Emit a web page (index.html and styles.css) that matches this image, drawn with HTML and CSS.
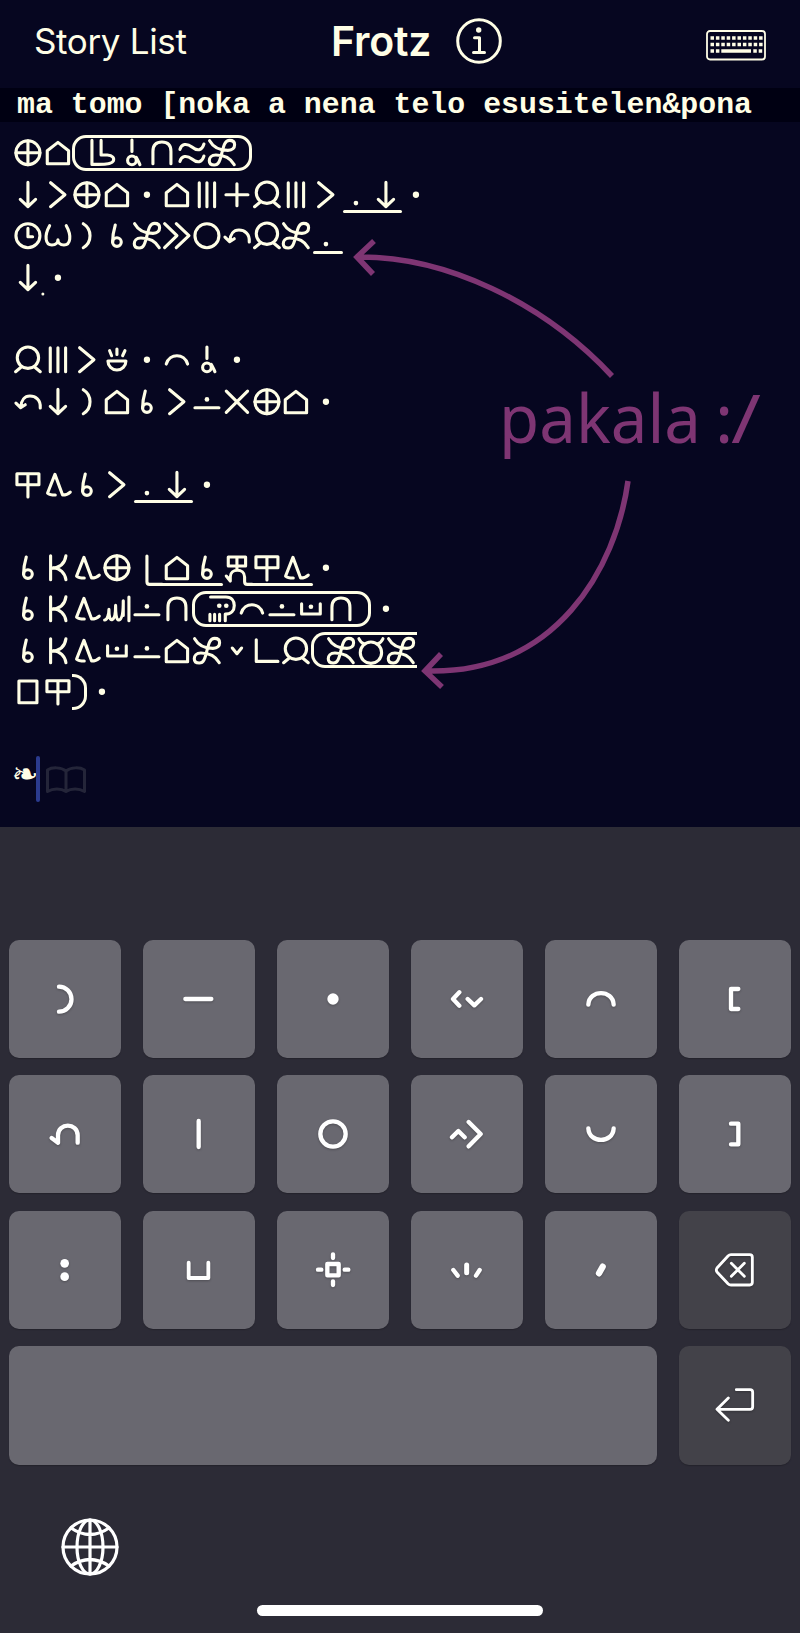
FILE: index.html
```
<!DOCTYPE html>
<html lang="tok">
<head>
<meta charset="utf-8">
<title>Frotz</title>
<link rel="stylesheet" href="styles.css">
</head>
<body>
<svg class="defs" aria-hidden="true">
  <defs>
    <g id="ma"><circle r="36"/><path d="M0-36V36M-36 0H36"/></g>
    <g id="tomo"><path d="M0-31L32-6V33H-32V-6Z"/></g>
    <g id="noka"><path d="M-2.500-37V7H16C32 8 38 16 34 25C30 34 10 35-10 35H-30V-37"/></g>
    <g id="a"><path d="M0-38V-4M13 14C17 20 20 28 24 36"/><circle cy="23" r="13"/></g>
    <g id="nena"><path d="M-27 33V-4C-27-23-17-32 0-32S27-23 27-4V33"/></g>
    <g id="telo"><path d="M-36-10C-32-26-16-30 0-17S30-6 36-26M-36 26C-32 10-16 6 0 19S30 30 36 10"/></g>
    <g id="pona"><path d="M-37-36C-27-18-10-7 18-7C32-7 38-15 38-24C38-33 32-37 23-37C10-37 6-25 0 0C-6 25-10 37-23 37C-32 37-38 33-38 24C-38 15-32 7-18 7C10 7 27 18 37 36"/></g>
    <g id="ni"><path d="M0-37V36M-23 14L0 36L23 14"/></g>
    <g id="li"><path d="M-22-36L21 0L-22 36"/></g>
    <g id="stop"><circle class="dot" r="9.500"/></g>
    <g id="mute"><path d="M-23-36V36M0-36V36M23-36V36"/></g>
    <g id="en"><path d="M0-33V33M-33 0H33"/></g>
    <g id="jan"><circle cy="-6" r="32"/><path d="M-37 36L-20 22M37 36L20 22"/></g>
    <g id="low"><circle class="dot" cy="25" r="7"/></g>
    <g id="tenpo"><circle r="36"/><path d="M0-22V3H14"/></g>
    <g id="suwi"><path d="M-25-30C-42 0-38 28-18 28C-6 28 0 20 0 12C0 20 6 28 18 28C38 28 42 0 25-30"/></g>
    <g id="pini"><path d="M-11-36C16-20 16 20-11 36"/></g>
    <g id="mi"><circle cy="19" r="13"/><path d="M-5-32C-10-15-13 0-13 19"/></g>
    <g id="kin"><path d="M-37-36L0 0L-37 36M-2-36L36 0L-2 36"/></g>
    <g id="ale"><circle r="36"/></g>
    <g id="tan"><path d="M37 19C39-6 22-17 6-17C-10-17-20-5-21 15M-36 4L-22 18L-8 9"/></g>
    <g id="moku"><path d="M-27 4H27A27 27 0 0 1-27 4ZM0-32V-16M-22-27L-16-12M24-27L17-12"/></g>
    <g id="kama"><path d="M-32 13C-22-20 22-20 32 13"/></g>
    <g id="lon"><circle class="dot" cy="-7" r="7"/><path d="M-36 18H36"/></g>
    <g id="ala"><path d="M-32-32L32 32M32-32L-32 32"/></g>
    <g id="sign"><path d="M-33-33H33V0H-33ZM0-33V37"/></g>
    <g id="wile"><path d="M-8 31C-18 31-28 28-31 25L-9-31L14 31C23 31 32 27 37 22"/></g>
    <g id="ken"><path d="M-22-36V36M24-36C21-14 6 0-20 2M-14 0C6 2 21 16 24 36"/></g>
    <g id="pi"><path d="M0-35V42Q0 50 8 50H46"/></g>
    <g id="ijo"><path d="M-26-32H26V-5H-26ZM0-32V6M-32 25L-20 40V28C-20 1 23 1 23 28V42Q23 50 31 50H46"/></g>
    <g id="mun"><path d="M-37 34C-28 34-24 15-24 2C-24 20-22 34-15 33C-6 30-4 4-4-10C-4 10-3 35 6 34C18 32 19 0 19-24V20M36-35V36"/></g>
    <g id="moli"><path d="M-34-35H12C30-35 37-22 37-10C37 5 28 16 10 16V36M-36 17V36M-22 17V36M-7 17V36"/><circle class="dot" cx="-8" cy="-9" r="7"/><circle class="dot" cx="13" cy="-9" r="7"/></g>
    <g id="insa"><path d="M-28-15V16H28V-15"/><circle class="dot" cy="-6" r="7"/></g>
    <g id="anu"><path d="M-14-8L0 9L14-8"/></g>
    <g id="corner"><path d="M-32-33V32H33"/></g>
    <g id="akesi"><circle cy="6" r="32"/><path d="M-36-36Q-31-24-20-20M36-36Q31-24 20-20"/></g>
    <g id="lipu"><path d="M-27-32H27V33H-27Z"/></g>
    <g id="comma"><circle class="dot" cx="44.800" cy="49" r="4.500"/></g>
  </defs>
</svg>

<div class="screen">
  <header class="nav">
    <span class="back">Story List</span>
    <span class="title">Frotz</span>
    <svg class="info" viewBox="0 0 46 46"><circle cx="23" cy="23" r="21.300"/><circle class="solid" cx="22.700" cy="12" r="2.700"/><path d="M18.500 19.700H23.500V34M17.500 34.500H28.500"/></svg>
    <svg class="kbd" viewBox="0 0 60 31"><rect x="1" y="1" width="58" height="28.500" rx="3"/><path class="keys" d="M4.500 8H57M4.500 14.500H57"/><path class="bar" d="M4.500 21H8M9.900 21H13.400M15.300 21H45M47.300 21H50.800M52.700 21H56.200"/></svg>
  </header>
  <div class="status">ma tomo [noka a nena telo esusitelen&amp;pona</div>

  <main class="story">
    <div class="line"><svg><use href="#ma"/></svg><svg><use href="#tomo"/></svg><span class="cart"><svg><use href="#noka"/></svg><svg><use href="#a"/></svg><svg><use href="#nena"/></svg><svg><use href="#telo"/></svg><svg><use href="#pona"/></svg></span></div>
    <div class="line"><svg><use href="#ni"/></svg><svg><use href="#li"/></svg><svg><use href="#ma"/></svg><svg><use href="#tomo"/></svg><svg><use href="#stop"/></svg><svg><use href="#tomo"/></svg><svg><use href="#mute"/></svg><svg><use href="#en"/></svg><svg><use href="#jan"/></svg><svg><use href="#mute"/></svg><svg><use href="#li"/></svg><span class="under"><svg><use href="#low"/></svg><svg><use href="#ni"/></svg></span><svg><use href="#stop"/></svg></div>
    <div class="line"><svg><use href="#tenpo"/></svg><svg><use href="#suwi"/></svg><svg><use href="#pini"/></svg><svg><use href="#mi"/></svg><svg><use href="#pona"/></svg><svg><use href="#kin"/></svg><svg><use href="#ale"/></svg><svg><use href="#tan"/></svg><svg><use href="#jan"/></svg><svg><use href="#pona"/></svg><span class="under"><svg><use href="#low"/></svg></span></div>
    <div class="line"><svg><use href="#ni"/><use href="#comma"/></svg><svg><use href="#stop"/></svg></div>
    <div class="line"></div>
    <div class="line"><svg><use href="#jan"/></svg><svg><use href="#mute"/></svg><svg><use href="#li"/></svg><svg><use href="#moku"/></svg><svg><use href="#stop"/></svg><svg><use href="#kama"/></svg><svg><use href="#a"/></svg><svg><use href="#stop"/></svg></div>
    <div class="line"><svg><use href="#tan"/></svg><svg><use href="#ni"/></svg><svg><use href="#pini"/></svg><svg><use href="#tomo"/></svg><svg><use href="#mi"/></svg><svg><use href="#li"/></svg><svg><use href="#lon"/></svg><svg><use href="#ala"/></svg><svg><use href="#ma"/></svg><svg><use href="#tomo"/></svg><svg><use href="#stop"/></svg></div>
    <div class="line"></div>
    <div class="line"><svg><use href="#sign"/></svg><svg><use href="#wile"/></svg><svg><use href="#mi"/></svg><svg><use href="#li"/></svg><span class="under"><svg><use href="#low"/></svg><svg><use href="#ni"/></svg></span><svg><use href="#stop"/></svg></div>
    <div class="line"></div>
    <div class="line"><svg><use href="#mi"/></svg><svg><use href="#ken"/></svg><svg><use href="#wile"/></svg><svg><use href="#ma"/></svg><svg><use href="#pi"/></svg><span class="under joined"><svg><use href="#tomo"/></svg><svg><use href="#mi"/></svg></span><svg><use href="#ijo"/></svg><span class="under joined"><svg><use href="#sign"/></svg><svg><use href="#wile"/></svg></span><svg><use href="#stop"/></svg></div>
    <div class="line"><svg><use href="#mi"/></svg><svg><use href="#ken"/></svg><svg><use href="#wile"/></svg><svg><use href="#mun"/></svg><svg><use href="#lon"/></svg><svg><use href="#nena"/></svg><span class="cart"><svg><use href="#moli"/></svg><svg><use href="#kama"/></svg><svg><use href="#lon"/></svg><svg><use href="#insa"/></svg><svg><use href="#nena"/></svg></span><svg><use href="#stop"/></svg></div>
    <div class="line"><svg><use href="#mi"/></svg><svg><use href="#ken"/></svg><svg><use href="#wile"/></svg><svg><use href="#insa"/></svg><svg><use href="#lon"/></svg><svg><use href="#tomo"/></svg><svg><use href="#pona"/></svg><svg><use href="#anu"/></svg><svg><use href="#corner"/></svg><svg><use href="#jan"/></svg><span class="cart open-end"><svg><use href="#pona"/></svg><svg><use href="#akesi"/></svg><svg><use href="#pona"/></svg></span></div>
    <div class="line"><svg><use href="#lipu"/></svg><svg><use href="#sign"/></svg><span class="cart open-start"></span><svg><use href="#stop"/></svg></div>
    <div class="line"></div>
    <div class="prompt"><span class="leaf">❧</span><i class="cursor"></i><svg class="book" viewBox="0 0 40 28"><path d="M20 5C15 1 6 1 1.500 4V25.500C7 22 15 22 20 25.500C25 22 33 22 38.500 25.500V4C34 1 25 1 20 5ZV25"/></svg></div>
  </main>

  <svg class="note" viewBox="0 0 800 827">
    <path d="M358 257C445 256 543 302 612 376M374 241L357 257L373 274"/>
    <path d="M628 481C616 568 556 675 426 671M441 654L425 671L442 687"/>
    <text x="499" y="443" textLength="202" lengthAdjust="spacingAndGlyphs">pakala</text>
    <text x="715" y="443">:</text>
    <text x="731" y="443" textLength="30" lengthAdjust="spacingAndGlyphs">/</text>
  </svg>

  <section class="keyboard">
    <div class="grid">
      <div class="key"><svg viewBox="-60 -60 120 120"><path d="M-18-37A37.500 37.500 0 0 1-18 38"/></svg></div>
      <div class="key"><svg viewBox="-60 -60 120 120"><path d="M-41 0H37"/></svg></div>
      <div class="key"><svg viewBox="-60 -60 120 120"><circle class="dot" r="17"/></svg></div>
      <div class="key"><svg viewBox="-60 -60 120 120"><path d="M-23-20L-42 0L-23 20M2 0L22 19L42 0"/></svg></div>
      <div class="key"><svg viewBox="-60 -60 120 120"><path d="M-38 17C-36-29 36-29 38 17"/></svg></div>
      <div class="key"><svg viewBox="-60 -60 120 120"><path d="M10-30H-12V30H10"/></svg></div>

      <div class="key"><svg viewBox="-60 -60 120 120"><path d="M-40 12L-21 26V4C-21-35 38-35 38 4V26"/></svg></div>
      <div class="key"><svg viewBox="-60 -60 120 120"><path d="M-1-39V39"/></svg></div>
      <div class="key"><svg viewBox="-60 -60 120 120"><circle r="38"/></svg></div>
      <div class="key"><svg viewBox="-60 -60 120 120"><path d="M-45 10L-26-9L-7 10M5-36L41 0L5 37"/></svg></div>
      <div class="key"><svg viewBox="-60 -60 120 120"><path d="M-38-17C-36 29 36 29 38-17"/></svg></div>
      <div class="key"><svg viewBox="-60 -60 120 120"><path d="M-12-31H10V31H-12"/></svg></div>

      <div class="key"><svg viewBox="-60 -60 120 120"><circle class="dot" cx="-1" cy="-20" r="13"/><circle class="dot" cx="-1" cy="20" r="13"/></svg></div>
      <div class="key"><svg viewBox="-60 -60 120 120"><path class="thin" d="M-31-22V24H28V-22"/></svg></div>
      <div class="key"><svg viewBox="-60 -60 120 120"><path d="M-17-18H17V16H-17ZM-45-1H-35M35-1H46M0-47V-36M0 34V45"/></svg></div>
      <div class="key"><svg viewBox="-60 -60 120 120"><path d="M-41 0L-28 17M38 0L27 17"/><path class="bold" d="M-1-15V8"/></svg></div>
      <div class="key"><svg viewBox="-60 -60 120 120"><path class="fat" d="M5-10L-6 10"/></svg></div>
      <div class="key dark"><svg viewBox="-60 -60 120 120"><path d="M-12-46H44Q52-46 52-38V37Q52 45 44 45H-12Q-17 45-21 41L-54 6Q-58 0-54-6L-21-42Q-17-46-12-46ZM-11-20L28 19M28-20L-11 19"/></svg></div>

      <div class="key space"></div>
      <div class="key dark"><svg viewBox="-60 -60 120 120"><path d="M4-46H45Q53-46 53-38V5Q53 13 45 13H-52M-20-21L-54 13L-20 46"/></svg></div>
    </div>
    <svg class="globe" viewBox="-30 -30 60 60"><circle r="27"/><path d="M0-27V27M-27 0H27M-19-19Q0-6 19-19M-19 19Q0 6 19 19"/><ellipse rx="13" ry="27"/></svg>
    <div class="home"></div>
  </section>
</div>
</body>
</html>
```
FILE: styles.css
```
:root {
  --ink: #fffee6;
  --cell: 29.87px;
  --row: 41.44px;
}

* { box-sizing: border-box; }

body {
  margin: 0;
  background: #060620;
}

.defs { position: absolute; width: 0; height: 0; }

.screen {
  position: relative;
  width: 800px;
  height: 1633px;
  display: flex;
  flex-direction: column;
  overflow: hidden;
  color: var(--ink);
}

svg {
  display: block;
  flex: none;
  fill: none;
  stroke-linecap: round;
  stroke-linejoin: round;
}

/* Navigation bar */
.nav {
  height: 88px;
  flex: none;
  display: flex;
  align-items: center;
  padding: 0 34px 6px 34px;
  font-family: Inter, "Liberation Sans", sans-serif;
}

.back {
  width: 297px;
  font-size: 35px;
  letter-spacing: -0.35px;
}

.title {
  width: 125px;
  font-size: 41px;
  font-weight: 600;
  letter-spacing: -0.2px;
}

.info { width: 46px; height: 46px; stroke: var(--ink); stroke-width: 3; }
.info .solid { fill: var(--ink); stroke: none; }

.kbd { width: 60px; height: 31px; margin: 8px 0 0 auto; stroke: var(--ink); stroke-width: 1.8; }
.kbd path { stroke-linecap: butt; stroke-width: 3.6; }
.kbd .keys { stroke-dasharray: 3.5 1.9; }

.status {
  height: 34px;
  flex: none;
  padding-left: 17px;
  background: #000012;
  font: bold 29.88px/35px "Liberation Mono", monospace;
  white-space: pre;
}

/* Story text */
.story {
  height: 705px;
  flex: none;
  padding: 10.300px 0 0 12.700px;
}

.line, .prompt { height: var(--row); display: flex; align-items: center; }

.line svg {
  width: var(--cell);
  height: var(--row);
  overflow: visible;
  stroke: var(--ink);
  stroke-width: 9.300;
}

.line use { transform: translate(calc(var(--cell) / 2), calc(var(--row) / 2)) scale(0.3333); }

.dot { fill: var(--ink); stroke: none; }

.cart {
  height: 36px;
  display: flex;
  align-items: center;
  padding: 0 12px;
  border: 3px solid var(--ink);
  border-radius: 14px;
  margin: 0 -0.066px;
}

.cart.open-end {
  border-right: 0;
  border-radius: 14px 0 0 14px;
  padding-right: 1px;
}

.cart.open-start {
  width: 15px;
  padding: 0;
  border-left: 0;
  border-radius: 0 14px 14px 0;
}

.under { position: relative; display: flex; }

.under::after {
  content: "";
  position: absolute;
  left: 2px;
  right: -1.500px;
  bottom: 2.600px;
  height: 2.900px;
  border-radius: 1.500px;
  background: var(--ink);
}

.under.joined::after { left: -1px; }

.leaf {
  width: 23px;
  margin-left: -1px;
  font: 32px/41px "DejaVu Sans", sans-serif;
  white-space: nowrap;
}

.cursor {
  width: 4.600px;
  height: 46px;
  margin: 8px 0 0 1px;
  border-radius: 2px;
  background: #2b3b8e;
}

.book {
  width: 40px;
  height: 28px;
  margin: 10px 0 0 5.500px;
  stroke: #242539;
  stroke-width: 3;
}

/* Hand-drawn annotation over the story */
.note {
  position: absolute;
  top: 0;
  left: 0;
  width: 800px;
  height: 827px;
  stroke: #7e3573;
  stroke-width: 5.500;
}

.note path { stroke-linecap: butt; stroke-linejoin: miter; }

.note text {
  fill: #7e3573;
  stroke: none;
  font: 68px "Noto Sans", sans-serif;
}

/* Keyboard */
.keyboard {
  flex: 1;
  display: flex;
  flex-direction: column;
  padding: 112.500px 8.500px 0;
  background: #2c2b36;
}

.grid {
  display: grid;
  grid-template-columns: repeat(6, 112.600px);
  grid-auto-rows: 118.300px;
  gap: 17.300px 21.450px;
}

.key {
  display: flex;
  align-items: center;
  justify-content: center;
  border-radius: 10px;
  background: #696870;
  box-shadow: 0 1px 1px #24232c;
}

.key.dark { background: #434249; }
.key.space { grid-column: span 5; }

.key svg {
  width: 40px;
  height: 40px;
  overflow: visible;
  stroke: #fff;
  stroke-width: 13;
  filter: drop-shadow(0 1px 1px rgba(0, 0, 0, 0.25));
}

.key .dot { fill: #fff; }
.key .thin { stroke-width: 11.5; }
.key .bold { stroke-width: 15; }
.key .fat { stroke-width: 19; }
.key.dark svg { stroke-width: 8.500; }

.globe {
  width: 60px;
  height: 60px;
  margin: 52.500px 0 0 51px;
  stroke: #fff;
  stroke-width: 3.200;
}

.home {
  width: 286px;
  height: 11px;
  margin: 27.500px 0 0 248.500px;
  border-radius: 6px;
  background: #fff;
}
```
